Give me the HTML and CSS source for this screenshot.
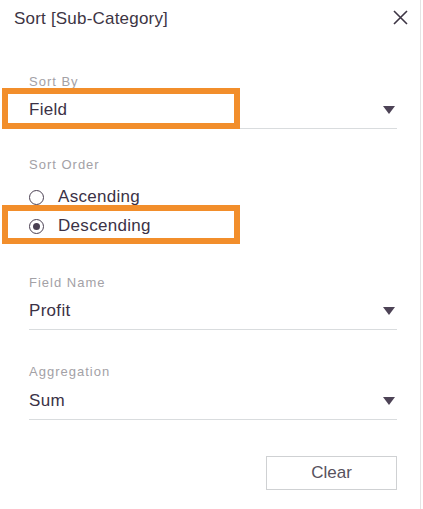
FILE: index.html
```html
<!DOCTYPE html>
<html>
<head>
<meta charset="utf-8">
<link rel="stylesheet" href="styles.css">
</head>
<body>
<div class="dialog">
  <div class="header">
    <div class="title">Sort [Sub-Category]</div>
    <svg class="close" width="15" height="15" viewBox="0 0 15 15"><path d="M1 1L14 14M14 1L1 14" stroke="#3d3544" stroke-width="1.6" fill="none"/></svg>
  </div>
  <div class="content">
    <div class="label first">Sort By</div>
    <div class="select">
      <span class="value">Field</span>
      <svg class="arrow" width="12" height="8" viewBox="0 0 12 8"><path d="M0 0H12L6 8Z" fill="#4d4356"/></svg>
    </div>

    <div class="label order">Sort Order</div>
    <div class="radios">
      <div class="radio"><span class="circle"></span><span class="value">Ascending</span></div>
      <div class="radio"><span class="circle checked"></span><span class="value">Descending</span></div>
    </div>

    <div class="label fieldname">Field Name</div>
    <div class="select">
      <span class="value">Profit</span>
      <svg class="arrow" width="12" height="8" viewBox="0 0 12 8"><path d="M0 0H12L6 8Z" fill="#4d4356"/></svg>
    </div>

    <div class="label agg">Aggregation</div>
    <div class="select last">
      <span class="value">Sum</span>
      <svg class="arrow" width="12" height="8" viewBox="0 0 12 8"><path d="M0 0H12L6 8Z" fill="#4d4356"/></svg>
    </div>

    <div class="actions">
      <button class="btn">Clear</button>
    </div>
  </div>
  <div class="highlight h1"></div>
  <div class="highlight h2"></div>
</div>
</body>
</html>
```

FILE: styles.css
```css
html, body {
  margin: 0;
  padding: 0;
  background: #ffffff;
}
body {
  font-family: "Liberation Sans", Arial, sans-serif;
}
.dialog {
  position: relative;
  width: 421px;
  height: 509px;
  box-sizing: border-box;
  border-right: 1px solid #e4e4e4;
}
.header {
  display: flex;
  justify-content: space-between;
  align-items: flex-start;
  padding: 8px 12px 0 14px;
}
.title {
  font-size: 17px;
  line-height: 22px;
  letter-spacing: 0.2px;
  color: #3d3544;
}
.close {
  margin-top: 2px;
  display: block;
}
.content {
  padding: 0 23px 0 29px;
  display: flex;
  flex-direction: column;
}
.label {
  font-size: 13px;
  line-height: 15px;
  letter-spacing: 1px;
  color: #a3a1a6;
}
.label.first { margin-top: 44px; }
.label.order { margin-top: 28px; }
.label.fieldname { margin-top: 38px; }
.label.agg { margin-top: 34px; }
.select {
  margin-top: 10px;
  display: flex;
  justify-content: space-between;
  align-items: center;
  padding: 0 2px 7px 0;
  border-bottom: 1px solid #d9dcde;
}
.select.last { margin-top: 11px; }
.value {
  font-size: 17px;
  line-height: 22px;
  letter-spacing: 0.3px;
  color: #3b3246;
}
.arrow { display: block; }
.radios {
  margin-top: 14px;
  display: flex;
  flex-direction: column;
  gap: 7px;
}
.radio {
  display: flex;
  align-items: center;
  gap: 14px;
}
.circle {
  width: 15px;
  height: 15px;
  box-sizing: border-box;
  border: 1.5px solid #4a4052;
  border-radius: 50%;
  display: flex;
  align-items: center;
  justify-content: center;
}
.circle.checked::after {
  content: "";
  width: 7px;
  height: 7px;
  border-radius: 50%;
  background: #4a4052;
}
.actions {
  margin-top: 36px;
  display: flex;
  justify-content: flex-end;
}
.btn {
  width: 131px;
  height: 34px;
  background: #ffffff;
  border: 1px solid #cfd1d3;
  border-radius: 0;
  font-family: "Liberation Sans", Arial, sans-serif;
  font-size: 17px;
  color: #57525d;
  padding: 0;
}
.highlight {
  position: absolute;
  left: 2px;
  width: 238px;
  box-sizing: border-box;
  border: 6px solid #f28e2b;
}
.h1 { top: 88px; height: 41px; }
.h2 { top: 205px; height: 39px; }
```
